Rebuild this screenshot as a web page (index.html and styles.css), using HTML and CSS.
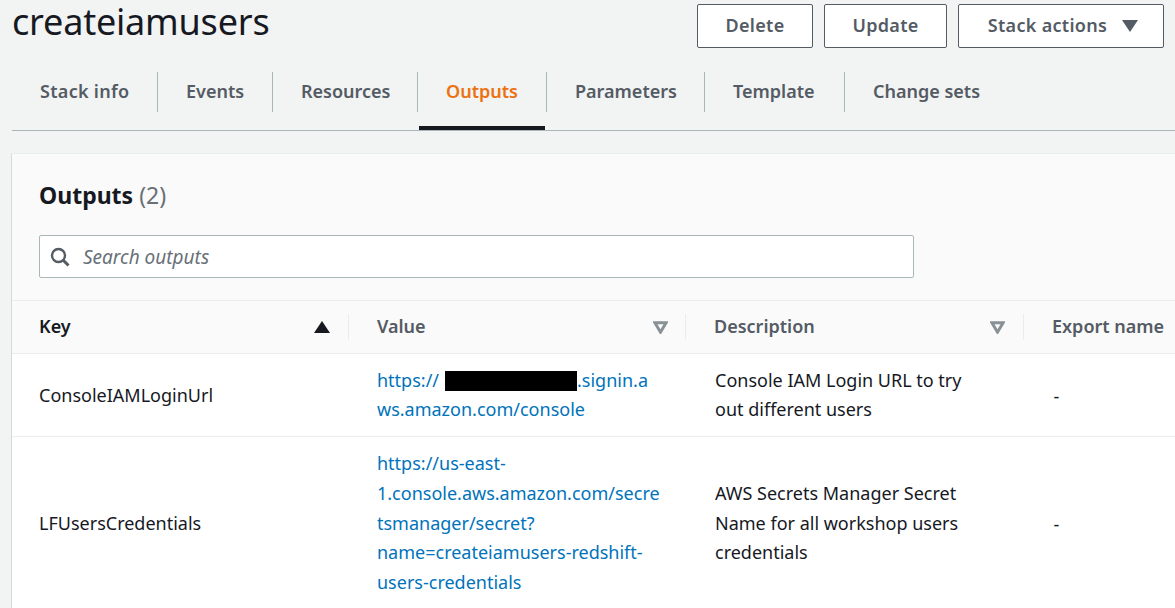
FILE: index.html
```html
<!DOCTYPE html>
<html lang="en">
<head>
<meta charset="utf-8">
<title>createiamusers</title>
<link rel="stylesheet" href="styles.css">
</head>
<body>
<div class="page">
  <header class="head">
    <h1>createiamusers</h1>
    <div class="actions">
      <button class="btn btn-delete">Delete</button>
      <button class="btn btn-update">Update</button>
      <button class="btn btn-stack">Stack actions
        <svg class="caret" viewBox="0 0 16 12" width="16" height="12"><path d="M0 0H16L8 12Z" fill="#545b64"/></svg>
      </button>
    </div>
  </header>
  <nav class="tabs">
    <a class="tab t1">Stack info</a>
    <a class="tab t2">Events</a>
    <a class="tab t3">Resources</a>
    <a class="tab t4 active">Outputs</a>
    <a class="tab t5">Parameters</a>
    <a class="tab t6">Template</a>
    <a class="tab t7">Change sets</a>
  </nav>
  <section class="panel">
    <div class="panel-top">
      <h2>Outputs <span class="count">(2)</span></h2>
      <div class="search">
        <svg class="glass" viewBox="0 0 20 20" width="20" height="20"><circle cx="8.5" cy="8.5" r="6.5" fill="none" stroke="#545b64" stroke-width="2.4"/><path d="M13 13L18.5 18.5" stroke="#545b64" stroke-width="3"/></svg>
        <span class="placeholder">Search outputs</span>
      </div>
    </div>
    <div class="row row-head">
      <div class="cell hcell first"><span>Key</span>
        <svg viewBox="0 0 16 12" width="16" height="12"><path d="M8 0L16 12H0Z" fill="#16191f"/></svg>
      </div>
      <div class="cell hcell"><span>Value</span>
        <svg viewBox="0 0 16 14" width="15" height="13"><path d="M2 2H14L8 12Z" fill="none" stroke="#879196" stroke-width="3.2"/></svg>
      </div>
      <div class="cell hcell"><span>Description</span>
        <svg viewBox="0 0 16 14" width="15" height="13"><path d="M2 2H14L8 12Z" fill="none" stroke="#879196" stroke-width="3.2"/></svg>
      </div>
      <div class="cell hcell"><span>Export name</span></div>
    </div>
    <div class="row row-one">
      <div class="cell">ConsoleIAMLoginUrl</div>
      <div class="cell"><a class="link">https://<span class="redact"></span>.signin.a<br>ws.amazon.com/console</a></div>
      <div class="cell">Console IAM Login URL to try<br>out different users</div>
      <div class="cell dash">-</div>
    </div>
    <div class="row row-two">
      <div class="cell">LFUsersCredentials</div>
      <div class="cell"><a class="link">https://us-east-<br>1.console.aws.amazon.com/secre<br>tsmanager/secret?<br>name=createiamusers-redshift-<br>users-credentials</a></div>
      <div class="cell">AWS Secrets Manager Secret<br>Name for all workshop users<br>credentials</div>
      <div class="cell dash">-</div>
    </div>
  </section>
</div>
</body>
</html>
```
FILE: styles.css
```css
* { box-sizing: border-box; }
html, body { margin: 0; height: 100%; overflow: hidden; }
body {
  background: #f2f3f3;
  font-family: "Noto Sans", "Liberation Sans", sans-serif;
  color: #16191f;
}
.page { padding-left: 12px; width: 1175px; height: 608px; overflow: hidden; }
.head { display: flex; justify-content: space-between; height: 60px; padding-right: 11px; }
h1 { margin: 0; font-size: 36px; line-height: 44px; font-weight: 400; letter-spacing: -0.2px; }
.actions { display: flex; gap: 11px; padding-top: 4px; }
.btn {
  height: 44px;
  background: #fff;
  border: 1px solid #545b64;
  border-radius: 2px;
  font: 600 18px "Noto Sans", sans-serif;
  letter-spacing: 0.3px;
  color: #545b64;
  padding: 0 0 2px;
}
.btn-delete { width: 116px; }
.btn-update { width: 123px; }
.btn-stack { width: 206px; padding-left: 4px; }
.caret { margin-left: 10px; vertical-align: 0; }
.tabs { display: flex; height: 71px; border-bottom: 1px solid #aab7b8; padding-top: 12px; }
.tab {
  height: 40px;
  padding: 0 0 2px 28px;
  font-size: 18px;
  font-weight: 600;
  line-height: 38px;
  color: #545b64;
  border-right: 1px solid #aab7b8;
  position: relative;
  white-space: nowrap;
}
.t1 { width: 146px; letter-spacing: 0.3px; }
.t2 { width: 115px; }
.t3 { width: 145px; }
.t4 { width: 129px; }
.t5 { width: 158px; }
.t6 { width: 140px; }
.t7 { border-right: 0; }
.active { color: #ec7211; }
.active::after {
  content: "";
  position: absolute;
  left: 1px;
  right: 1px;
  top: 54px;
  height: 4px;
  background: #16191f;
}
.panel {
  margin-top: 22px;
  margin-left: -1px;
  background: #fff;
  border-left: 1px solid #d5dbdb;
  border-top: 1px solid #eaeded;
}
.panel-top { background: #fafafa; height: 147px; padding: 25px 0 0 27px; border-bottom: 1px solid #eaeded; }
h2 { margin: 0; font-size: 23px; line-height: 32px; font-weight: 700; }
.count { font-weight: 400; color: #687078; }
.search {
  width: 875px;
  height: 43px;
  margin-top: 24px;
  background: #fff;
  border: 1px solid #aab7b8;
  border-radius: 2px;
  display: flex;
  align-items: center;
  padding-left: 10px;
  gap: 13px;
}
.placeholder { font-style: italic; font-size: 19px; line-height: 26px; color: #687078; }
.row { display: grid; grid-template-columns: 337px 337px 337.5px 337.5px; border-bottom: 1px solid #eaeded; }
.row-head { height: 53px; background: #fafafa; align-items: center; }
.row-one { height: 83px; }
.row-two { height: 174px; }
.cell { padding-left: 27px; padding-right: 17px; font-size: 18px; line-height: 29.7px; align-self: center; white-space: nowrap; }
.row > .cell:nth-child(2) { padding-left: 28px; }
.row > .cell:nth-child(3) { padding-left: 29px; }
.row > .cell:nth-child(4) { padding-left: 28.5px; }
.row-one > .cell { line-height: 29px; }
.row-one > .cell:first-child { padding-top: 1px; }
.row-head > .hcell:nth-child(3) { padding-left: 28px; padding-right: 18px; }
.hcell {
  display: flex;
  justify-content: space-between;
  align-items: center;
  height: 26px;
  font-weight: 600;
  color: #545b64;
  border-right: 1px solid #eaeded;
}
.row-head > .hcell.first { color: #16191f; padding-right: 18px; }
.hcell:last-child { border-right: 0; }
.link { color: #0073bb; }
.redact { display: inline-block; width: 132px; height: 20px; margin-left: 6px; background: #000; vertical-align: -4px; }
.row > .cell.dash { padding-left: 30px; padding-top: 2px; }
```
